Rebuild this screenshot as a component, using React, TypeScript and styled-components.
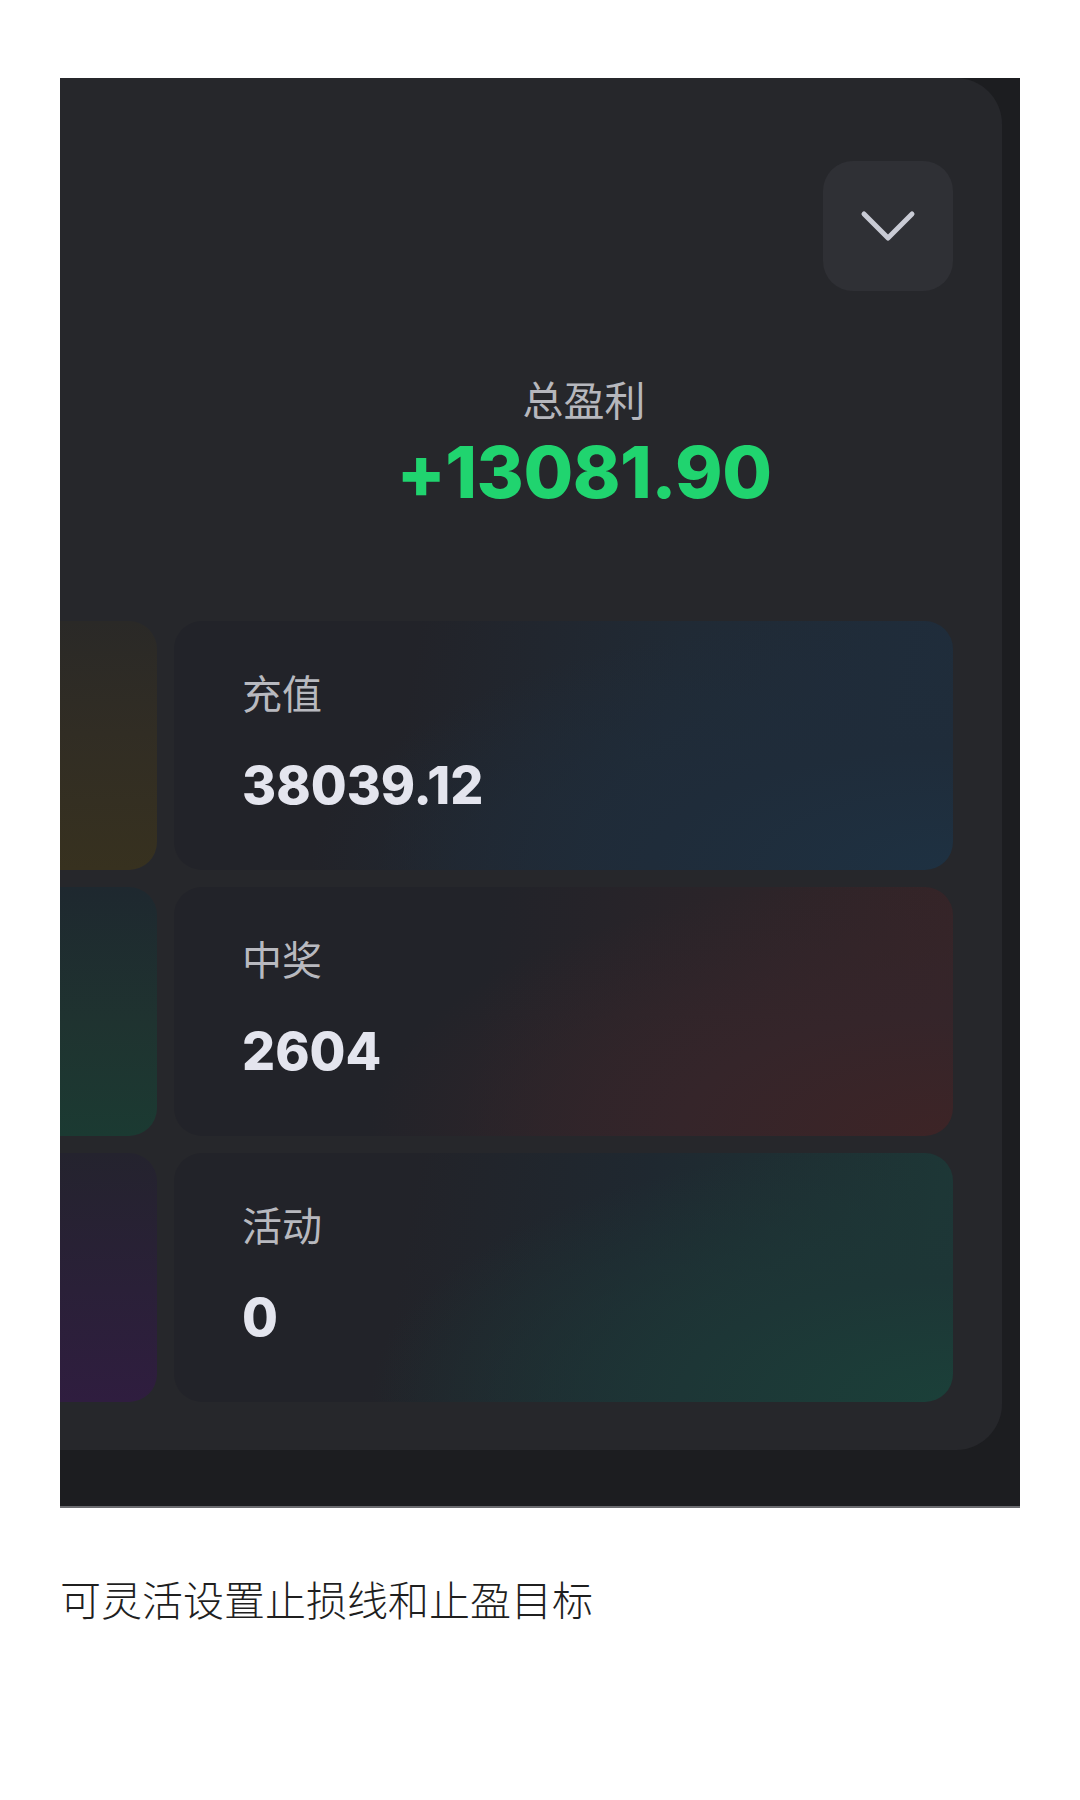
import React from 'react';
import styled, { createGlobalStyle } from 'styled-components';

const GlobalStyle = createGlobalStyle`
  html, body {
    margin: 0;
    padding: 0;
    background: #ffffff;
  }
  body {
    font-family: Inter, "Noto Sans CJK SC", sans-serif;
  }
`;

type Tint = {
  side: string;
  main: string;
};

type StatItem = {
  label: string;
  value: string;
  tint: Tint;
};

const stats: StatItem[] = [
  {
    label: '充值',
    value: '38039.12',
    tint: {
      side: 'linear-gradient(180deg, #2a2927 0%, #312d24 45%, #37311f 100%)',
      main:
        'radial-gradient(110% 140% at 100% 100%, #1e3142 0%, #1f2c3a 35%, rgba(34,36,42,0) 75%), linear-gradient(100deg, #222329 30%, #202a35 62%, #1f2d3c 100%)',
    },
  },
  {
    label: '中奖',
    value: '2604',
    tint: {
      side: 'linear-gradient(180deg, #1e282f 0%, #1f3330 55%, #1b3a32 100%)',
      main:
        'radial-gradient(100% 140% at 100% 100%, #3d2426 0%, #35252a 35%, rgba(34,36,42,0) 75%), linear-gradient(100deg, #222329 40%, #2b2429 68%, #372427 100%)',
    },
  },
  {
    label: '活动',
    value: '0',
    tint: {
      side: 'linear-gradient(180deg, #24232e 0%, #2a2038 55%, #2f1d3f 100%)',
      main:
        'radial-gradient(100% 140% at 100% 100%, #1b4039 0%, #1d3636 35%, rgba(34,36,42,0) 75%), linear-gradient(100deg, #222329 30%, #1f2830 58%, #1d3937 100%)',
    },
  },
];

const Page = styled.div`
  padding: 78px 60px 0 60px;
`;

const Frame = styled.div`
  width: 960px;
  height: 1430px;
  background: #1c1d20;
  border-bottom: 2px solid #6b6c70;
  box-sizing: border-box;
`;

const Panel = styled.div`
  width: 942px;
  height: 1372px;
  background: #26272b;
  border-radius: 0 46px 46px 0;
  display: flex;
  flex-direction: column;
  box-sizing: border-box;
  padding-bottom: 50px;
`;

const TopBar = styled.div`
  display: flex;
  justify-content: flex-end;
  padding: 83px 49px 0 0;
`;

const DropButton = styled.button`
  width: 130px;
  height: 130px;
  border: none;
  border-radius: 30px;
  background: #2f3035;
  display: flex;
  align-items: center;
  justify-content: center;
  padding: 0;
  cursor: pointer;
`;

const Summary = styled.div`
  padding: 83px 0 0 106px;
  text-align: center;
`;

const SummaryLabel = styled.div`
  font-family: "Noto Sans CJK SC", sans-serif;
  font-size: 41px;
  line-height: 48px;
  color: #b6b7bd;
`;

const SummaryValue = styled.div`
  margin-top: 14px;
  font-family: Inter, sans-serif;
  font-weight: 800;
  font-size: 72px;
  line-height: 72px;
  color: #20d46f;
  letter-spacing: -0.5px;
`;

const StatList = styled.div`
  margin-top: 113px;
  display: grid;
  grid-template-columns: 97px 779px;
  grid-auto-rows: 249px;
  column-gap: 17px;
  row-gap: 17px;
`;

const SideCard = styled.div<{ $bg: string }>`
  border-radius: 0 28px 28px 0;
  background: ${p => p.$bg};
`;

const StatCard = styled.div<{ $bg: string }>`
  border-radius: 28px;
  background: ${p => p.$bg};
  padding: 47px 0 0 68px;
  box-sizing: border-box;
`;

const StatLabel = styled.div`
  font-family: "Noto Sans CJK SC", sans-serif;
  font-size: 40px;
  line-height: 48px;
  color: #b8b9bf;
`;

const StatValue = styled.div`
  margin-top: 44px;
  font-family: Inter, sans-serif;
  font-weight: 800;
  font-size: 52px;
  line-height: 52px;
  color: #e4e5ee;
`;

const Caption = styled.p`
  margin: 66px 0 0 0;
  font-family: "Noto Sans CJK SC", sans-serif;
  font-weight: 300;
  font-size: 41px;
  line-height: 48px;
  color: #1f1f1f;
`;

const Chevron = () => (
  <svg width="56" height="34" viewBox="0 0 56 34" fill="none">
    <path
      d="M4 5 L28 29 L52 5"
      stroke="#c9cbd5"
      strokeWidth="5"
      strokeLinecap="round"
      strokeLinejoin="round"
    />
  </svg>
);

const App = () => (
  <>
    <GlobalStyle />
    <Page>
      <Frame>
        <Panel>
          <TopBar>
            <DropButton aria-label="展开">
              <Chevron />
            </DropButton>
          </TopBar>
          <Summary>
            <SummaryLabel>总盈利</SummaryLabel>
            <SummaryValue>+13081.90</SummaryValue>
          </Summary>
          <StatList>
            {stats.map(s => (
              <React.Fragment key={s.label}>
                <SideCard $bg={s.tint.side} />
                <StatCard $bg={s.tint.main}>
                  <StatLabel>{s.label}</StatLabel>
                  <StatValue>{s.value}</StatValue>
                </StatCard>
              </React.Fragment>
            ))}
          </StatList>
        </Panel>
      </Frame>
      <Caption>可灵活设置止损线和止盈目标</Caption>
    </Page>
  </>
);

export default App;
